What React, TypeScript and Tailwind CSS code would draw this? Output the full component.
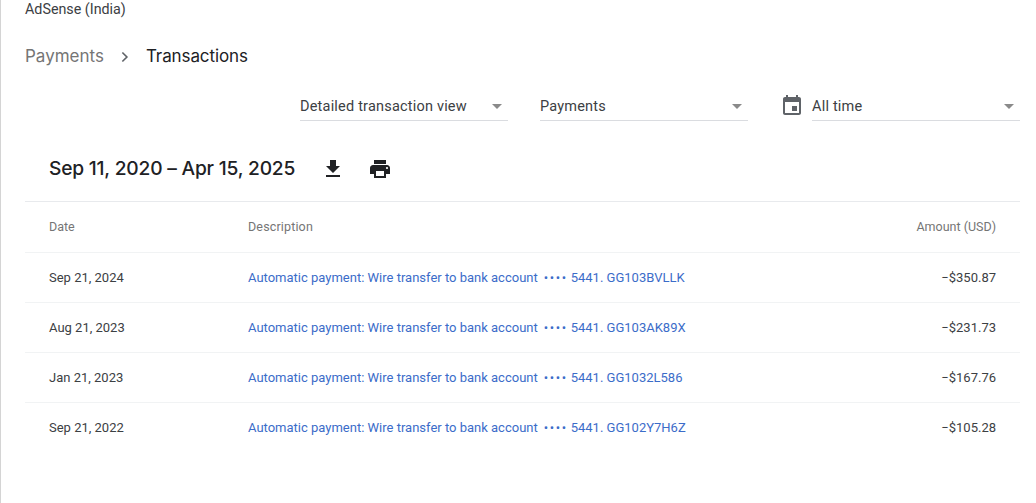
import React from 'react'

const rows = [
  { date: 'Sep 21, 2024', ref: 'GG103BVLLK', amount: '−$350.87' },
  { date: 'Aug 21, 2023', ref: 'GG103AK89X', amount: '−$231.73' },
  { date: 'Jan 21, 2023', ref: 'GG1032L586', amount: '−$167.76' },
  { date: 'Sep 21, 2022', ref: 'GG102Y7H6Z', amount: '−$105.28' },
]

function Caret() {
  return <span className="w-0 h-0 border-x-[5px] border-x-transparent border-t-[5px] border-t-[#8a8a8a]" />
}

function Select({ label, className }: { label: string; className: string }) {
  return (
    <div className={`h-[30px] pt-[2px] flex items-center justify-between border-b border-[#dadce0] ${className}`}>
      <span className="text-[14.5px] text-[#3c4043] tracking-[0.2px]">{label}</span>
      <Caret />
    </div>
  )
}

export default function App() {
  return (
    <div className="w-[1036px] h-[503px] overflow-hidden bg-white border-l border-[#d4d4d4] font-['Roboto',sans-serif] text-[#202124]">
      <div className="pl-[24px] pr-[16px]">
        <div className="h-[18px] pt-[2px] flex items-center text-[14.3px] text-[#3c4043]">AdSense (India)</div>

        <div className="mt-[18px] h-[42px] flex items-center text-[17px] font-['Inter','Roboto',sans-serif]">
          <span className="text-[#757575]">Payments</span>
          <svg viewBox="0 0 24 24" className="w-[18px] h-[18px] ml-[12px] mr-[12px] text-[#5f6368]" fill="none" stroke="currentColor" strokeWidth="2.2">
            <path d="M8.5 6l6 6-6 6" />
          </svg>
          <span className="text-[#202124] tracking-[-0.1px]">Transactions</span>
        </div>

        <div className="mt-[13px] flex items-center justify-end">
          <Select label="Detailed transaction view" className="w-[208px] pr-[6px]" />
          <Select label="Payments" className="w-[208px] ml-[32px] pr-[6px]" />
          <svg viewBox="0 0 24 24" className="w-[24px] h-[24px] ml-[32px] mr-[8px] text-[#5f6368]" fill="currentColor">
            <path d="M19 3h-1V1h-2v2H8V1H6v2H5c-1.1 0-2 .9-2 2v14c0 1.1.9 2 2 2h14c1.1 0 2-.9 2-2V5c0-1.1-.9-2-2-2zm0 16H5V8h14v11zM12 12h5v5h-5z" />
          </svg>
          <Select label="All time" className="w-[208px] pr-[6px]" />
        </div>

        <div className="h-[81px] pl-[24px] pt-[15px] flex items-center border-b border-[#e8eaed]">
          <span className="text-[19.2px] font-medium font-['Inter','Roboto',sans-serif] text-[#202124] tracking-[-0.2px]">Sep 11, 2020 – Apr 15, 2025</span>
          <svg viewBox="0 0 24 24" className="w-[24px] h-[24px] ml-[26px] text-[#202124]" fill="currentColor">
            <path d="M19 9h-4V3H9v6H5l7 7 7-7zM5 18v2h14v-2H5z" />
          </svg>
          <svg viewBox="0 0 24 24" className="w-[24px] h-[24px] ml-[23px] text-[#202124]" fill="currentColor">
            <path d="M19 8H5c-1.66 0-3 1.34-3 3v6h4v4h12v-4h4v-6c0-1.66-1.34-3-3-3zm-3 11H8v-5h8v5zm3-7c-.55 0-1-.45-1-1s.45-1 1-1 1 .45 1 1-.45 1-1 1zm-1-9H6v4h12V3z" />
          </svg>
        </div>

        <div className="h-[51px] flex items-center px-[24px] border-b border-[#f1f3f4] text-[12.5px] text-[#757575]">
          <div className="w-[199px]">Date</div>
          <div className="flex-1 tracking-[0.15px]">Description</div>
          <div>Amount (USD)</div>
        </div>

        {rows.map((r) => (
          <div key={r.ref} className="h-[50px] flex items-center px-[24px] border-b border-[#f1f3f4] last:border-b-0 text-[13px]">
            <div className="w-[199px] text-[#3c4043]">{r.date}</div>
            <div className="flex-1 text-[#3b6cc9] whitespace-pre">
              Automatic payment: Wire transfer to bank account
              <span className="ml-[6px] tracking-[1.6px]">••••</span>
              <span className="ml-[3px]">5441. {r.ref}</span>
            </div>
            <div className="text-[#3c4043]">{r.amount}</div>
          </div>
        ))}
      </div>
    </div>
  )
}
